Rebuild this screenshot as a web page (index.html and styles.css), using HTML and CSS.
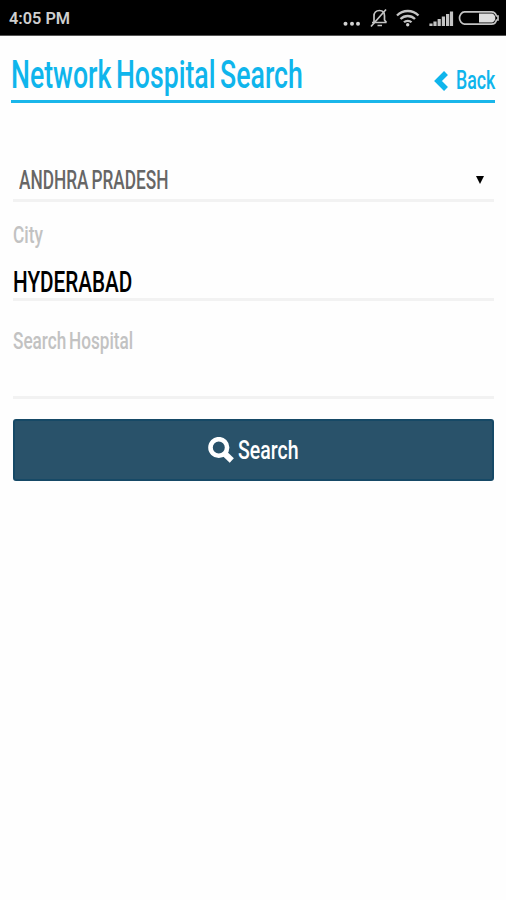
FILE: index.html
```html
<!DOCTYPE html>
<html lang="en">

<head>
  <meta charset="UTF-8" />
  <meta name="viewport" content="width=device-width, initial-scale=1.0" />
  <title>Network Hospital Search</title>
  <link rel="stylesheet" href="styles.css">
</head>

<body>
  <div class="status-bar">
    <span class="time">4:05 PM</span>
    <svg class="status-icons" width="160" height="24" viewBox="0 0 160 24" fill="none" stroke="#c4c4c4">
      <g fill="#d2d2d2" stroke="none">
        <circle cx="5.5" cy="17.7" r="2" />
        <circle cx="12" cy="17.7" r="2" />
        <circle cx="18" cy="17.7" r="2" />
      </g>
      <!-- muted bell -->
      <path d="M32 16.500h14.500M34 16V10c0-3 2-5.500 5.500-5.500s5 2.500 5 5.500v4l2 2.500M37.500 19.500h4.500" stroke-width="1.700" />
      <path d="M31 20.500L46 3.500" stroke-width="1.700" />
      <!-- wifi -->
      <path d="M57 9.500c6-6 15.500-6 21.500 0M60.500 13c4-4 10.500-4 14.500 0M64 16.300c2-2 5.500-2 7.500 0" stroke-width="2.300" />
      <circle cx="67.700" cy="18.800" r="1.700" fill="#d2d2d2" stroke="none" />
      <!-- signal -->
      <path d="M91 20v-2.500M95 20v-4.500M99.200 20v-7M103.400 20v-9.500M107.600 20v-12M111.500 20V5.500" stroke-width="3.200" />
      <!-- battery -->
      <path d="M124.500 5.800h27c3 0 4.500 2.500 5 4.200h1.500v4h-1.500c-.5 2-2 4.200-5 4.200h-27c-3 0-5-3.500-5-6.200s2-6.200 5-6.200z" stroke-width="1.700" />
      <path d="M139 7.500h12.500c2.500 0 3.800 2.500 3.800 4.500s-1.300 4.500-3.800 4.500H139z" fill="#dedede" stroke="none" />
    </svg>
  </div>

  <header class="header">
    <h1><span class="narrow title">Network Hospital Search</span></h1>
    <a class="back" href="#">
      <svg width="14" height="20" viewBox="0 0 14 20">
        <path d="M12 2L4 10l8 8" fill="none" stroke="#0fb5ec" stroke-width="5.500" />
      </svg>
      <span class="narrow back-text">Back</span>
    </a>
  </header>

  <form class="search-form">
    <div class="field state">
      <span class="narrow state-name">ANDHRA PRADESH</span>
      <svg class="arrow" width="8" height="8" viewBox="0 0 8 8">
        <path d="M0 0h8L4 8z" fill="#000" />
      </svg>
    </div>

    <div class="field city">
      <label><span class="narrow city-label">City</span></label>
      <div class="value"><span class="narrow city-name">HYDERABAD</span></div>
    </div>

    <div class="field hospital">
      <label><span class="narrow hospital-label">Search Hospital</span></label>
    </div>

    <button type="button" class="search-btn">
      <svg width="26" height="26" viewBox="0 0 26 26" fill="none" stroke="#fff">
        <circle cx="10.800" cy="10.500" r="8.300" stroke-width="4.600" />
        <path d="M16.500 16.500l7.300 7" stroke-width="6" />
      </svg>
      <span class="narrow search-text">Search</span>
    </button>
  </form>
</body>

</html>
```

FILE: styles.css
```css
* {
  box-sizing: border-box;
}

body {
  margin: 0;
  background: #fefefe;
  font-family: Roboto, "Liberation Sans", sans-serif;
}

.status-bar {
  display: flex;
  justify-content: space-between;
  align-items: center;
  height: 36px;
  padding: 1px 6px 0 9px;
  background: #000;
  border-bottom: 1px solid #555;
}

.time {
  color: #cfcfcf;
  font-size: 16.3px;
  font-weight: 600;
}

.status-icons {
  overflow: visible;
}

/* condensed lettering */
.narrow {
  display: inline-block;
  transform-origin: left center;
  white-space: nowrap;
  font-weight: 500;
}

.header {
  display: flex;
  justify-content: space-between;
  height: 67px;
  margin: 0 11px;
  border-bottom: 3px solid #1ab6ea;
  color: #0fb5ec;
}

h1 {
  width: 300px;
  margin: 19px 0 0;
  font-size: 38px;
  font-weight: 400;
  line-height: 40px;
}

.title {
  transform: scaleX(0.702);
  word-spacing: -3px;
}

.back {
  display: flex;
  align-items: center;
  gap: 8px;
  width: 61px;
  height: 40px;
  margin-top: 25px;
  color: #0fb5ec;
  font-size: 25px;
  line-height: 40px;
  text-decoration: none;
}

.back svg {
  flex-shrink: 0;
}

.back-text {
  transform: scaleX(0.71);
}

.search-form {
  margin: 0 12px 0 13px;
}

.field {
  border-bottom: 3px solid #f2f2f2;
}

.state {
  display: flex;
  justify-content: space-between;
  align-items: center;
  height: 99px;
  padding: 58px 10px 0 6px;
  color: #666;
  font-size: 25px;
}

.state-name {
  transform: scaleX(0.69);
  word-spacing: -2px;
}

.city {
  height: 99px;
  padding-top: 18px;
}

label {
  display: block;
  color: #c2c2c2;
  font-size: 24px;
  line-height: 30px;
}

.city-label {
  transform: scaleX(0.72);
}

.value {
  margin-top: 12px;
  color: #000;
  font-size: 30px;
  line-height: 40px;
}

.city-name {
  transform: scaleX(0.69);
}

.hospital {
  height: 98px;
  padding-top: 25px;
}

.hospital-label {
  transform: scaleX(0.715);
  word-spacing: -2px;
}

.search-btn {
  display: flex;
  align-items: center;
  gap: 4px;
  width: 100%;
  height: 62px;
  margin-top: 20px;
  padding: 0 0 1px 193px;
  border: 2px solid #164966;
  border-radius: 3px;
  background: #29526a;
  color: #fff;
  font-family: inherit;
  font-size: 26px;
}

.search-text {
  transform: scaleX(0.75);
}
```
